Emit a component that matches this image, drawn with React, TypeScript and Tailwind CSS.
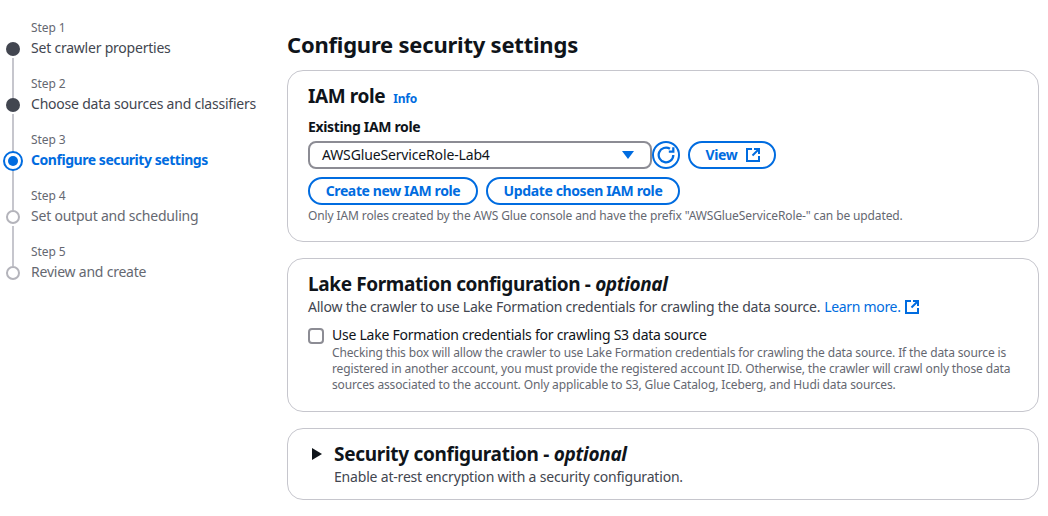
const steps = [
  { n: 1, title: 'Set crawler properties', state: 'done' },
  { n: 2, title: 'Choose data sources and classifiers', state: 'done' },
  { n: 3, title: 'Configure security settings', state: 'active' },
  { n: 4, title: 'Set output and scheduling', state: 'todo' },
  { n: 5, title: 'Review and create', state: 'todo' },
];

function ExternalIcon({ className }: { className: string }) {
  return (
    <svg viewBox="0 0 14 14" fill="none" stroke="currentColor" strokeWidth="2" className={className}>
      <path d="M13 8v5H1V1h5" />
      <path d="M8 1h5v5" />
      <path d="M13 1 6.5 7.5" />
    </svg>
  );
}

function Dot({ state }: { state: string }) {
  if (state === 'active') {
    return (
      <span className="w-5 h-5 rounded-full border-2 border-[#006ce0] flex items-center justify-center bg-white">
        <span className="w-[10px] h-[10px] rounded-full bg-[#006ce0]" />
      </span>
    );
  }
  if (state === 'done') return <span className="w-[14px] h-[14px] rounded-full bg-[#424650]" />;
  return <span className="w-[14px] h-[14px] rounded-full border-2 border-[#b4b4bb] bg-white" />;
}

function Stepper() {
  return (
    <div className="w-[287px] shrink-0 pt-[2px]">
      {steps.map((s, i) => (
        <div key={s.n} className="flex flex-col">
          <div className="flex h-[36px]">
            <div className="w-[26px] flex justify-center">
              {i > 0 && <div className="w-[2px] h-[40px] bg-[#c6c6cd]" />}
            </div>
            <div className="ml-[5px] pt-[17px] text-[12px] leading-[18px] text-[#656871]">Step {s.n}</div>
          </div>
          <div className="flex h-[20px] items-center relative z-10">
            <div className="w-[26px] pt-[1px] flex justify-center"><Dot state={s.state} /></div>
            <div
              className={`ml-[5px] text-[14px] leading-[20px] whitespace-nowrap ${
                s.state === 'active' ? 'font-bold tracking-[-0.45px] text-[#006ce0]' : s.state === 'done' ? 'tracking-[-0.22px] text-[#424650]' : 'tracking-[-0.22px] text-[#656871]'
              }`}
            >
              {s.title}
            </div>
          </div>
        </div>
      ))}
    </div>
  );
}

function PillButton({ children, className }: { children: React.ReactNode; className: string }) {
  return (
    <button className={`h-[28px] pb-[1px] rounded-full border-2 border-[#006ce0] text-[#006ce0] text-[14px] font-bold tracking-[-0.38px] flex items-center justify-center gap-[9px] ${className}`}>
      {children}
    </button>
  );
}

export default function App() {
  return (
    <div className="w-[1048px] h-[516px] overflow-hidden bg-white flex font-['Noto_Sans','Open_Sans',sans-serif] tracking-[-0.1px] text-[#0f141a]">
      <Stepper />
      <div className="w-[752px] shrink-0">
        <h1 className="pt-[29px] pb-[11px] text-[22px] leading-[30px] font-bold tracking-[-0.22px]">Configure security settings</h1>

        <section className="h-[172px] rounded-[16px] border border-[#c6c6cd] px-5 pt-[12px]">
          <div className="flex items-baseline gap-[8px]">
            <h2 className="text-[19px] leading-[26px] font-bold tracking-[-0.4px]">IAM role</h2>
            <span className="text-[12px] font-bold tracking-[-0.2px] text-[#006ce0]">Info</span>
          </div>
          <div className="mt-[8px] text-[14px] leading-[20px] font-bold tracking-[-0.35px]">Existing IAM role</div>
          <div className="mt-[4px] flex items-center">
            <div className="w-[344px] h-[28px] rounded-[8px] border-2 border-[#8c8c94] flex items-center justify-between pl-[12px] pr-[16px] text-[14px] tracking-[-0.15px]">
              <span className="pb-[1px]">AWSGlueServiceRole-Lab4</span>
              <svg viewBox="0 0 12 10" className="w-[12px] h-[10px] text-[#006ce0]" fill="currentColor">
                <path d="M0 1h12L6 9z" />
              </svg>
            </div>
            <button className="w-[28px] h-[28px] rounded-full border-2 border-[#006ce0] text-[#006ce0] flex items-center justify-center">
              <svg viewBox="0 0 16 16" fill="none" stroke="currentColor" strokeWidth="2" className="w-[18px] h-[18px]">
                <path d="M14.5 8A6.5 6.5 0 1 1 11.5 2.5" />
                <path d="M14.5 1v4h-4" />
              </svg>
            </button>
            <PillButton className="ml-[8px] w-[88px] pl-[2px]">
              View
              <ExternalIcon className="w-[14px] h-[14px] mt-[1px]" />
            </PillButton>
          </div>
          <div className="mt-[8px] flex gap-[8px]">
            <PillButton className="w-[170px]">Create new IAM role</PillButton>
            <PillButton className="w-[194px]">Update chosen IAM role</PillButton>
          </div>
          <p className="mt-[3px] text-[12px] leading-[16px] tracking-[-0.12px] text-[#656871]">
            Only IAM roles created by the AWS Glue console and have the prefix "AWSGlueServiceRole-" can be updated.
          </p>
        </section>

        <section className="mt-[16px] h-[154px] rounded-[16px] border border-[#c6c6cd] px-5 pt-[12px]">
          <h2 className="text-[19px] leading-[26px] font-bold tracking-[-0.38px]">
            Lake Formation configuration - <em>optional</em>
          </h2>
          <p className="flex items-center text-[14px] leading-[20px] tracking-[-0.22px] text-[#424650]">
            Allow the crawler to use Lake Formation credentials for crawling the data source.
            <span className="ml-[4px] tracking-[-0.32px] text-[#006ce0]">Learn more.</span>
            <ExternalIcon className="ml-[4px] w-[14px] h-[14px] text-[#006ce0]" />
          </p>
          <div className="mt-[8px] flex">
            <span className="mt-[3px] w-[16px] h-[16px] shrink-0 rounded-[4px] border-2 border-[#8c8c94]" />
            <div className="ml-[8px]">
              <div className="text-[14px] leading-[20px] tracking-[-0.24px]">Use Lake Formation credentials for crawling S3 data source</div>
              <p className="text-[12px] leading-[16px] tracking-[-0.14px] text-[#656871]">
                Checking this box will allow the crawler to use Lake Formation credentials for crawling the data source. If the data source is registered in another account, you must provide the registered account ID. Otherwise, the crawler will crawl only those data sources associated to the account. Only applicable to S3, Glue Catalog, Iceberg, and Hudi data sources.
              </p>
            </div>
          </div>
        </section>

        <section className="mt-[16px] h-[72px] rounded-[16px] border border-[#c6c6cd] pl-[24px] pt-[12px] flex">
          <svg viewBox="0 0 10 12" className="mt-[7px] w-[10px] h-[12px] text-[#0f141a]" fill="currentColor">
            <path d="M0 0l10 6-10 6z" />
          </svg>
          <div className="ml-[12px]">
            <h2 className="text-[19px] leading-[26px] font-bold tracking-[-0.3px]">
              Security configuration - <em>optional</em>
            </h2>
            <p className="text-[14px] leading-[20px] tracking-[-0.19px] text-[#424650]">Enable at-rest encryption with a security configuration.</p>
          </div>
        </section>
      </div>
    </div>
  );
}
